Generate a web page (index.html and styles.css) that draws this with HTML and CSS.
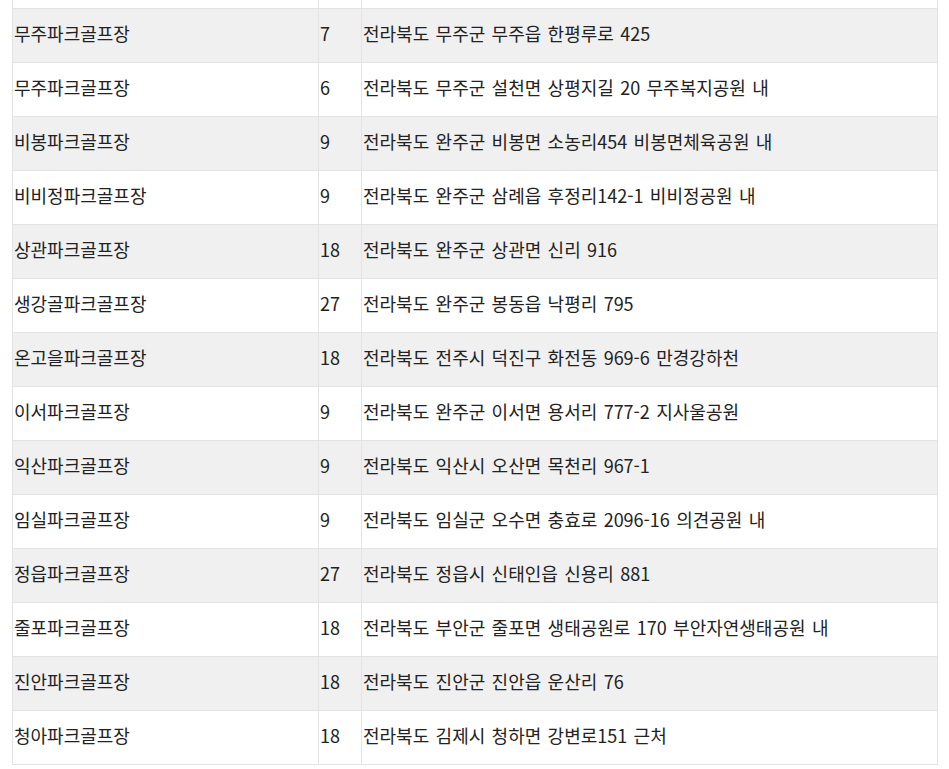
FILE: index.html
```html
<!DOCTYPE html>
<html lang="ko">
<head>
<meta charset="utf-8">
<link rel="stylesheet" href="styles.css">
</head>
<body>
<table class="golf">
  <colgroup><col class="c-name"><col class="c-holes"><col class="c-addr"></colgroup>
  <tbody>
    <tr class="top"><td></td><td></td><td></td></tr>
    <tr><td>무주파크골프장</td><td>7</td><td>전라북도 무주군 무주읍 한평루로 425</td></tr>
    <tr><td>무주파크골프장</td><td>6</td><td>전라북도 무주군 설천면 상평지길 20 무주복지공원 내</td></tr>
    <tr><td>비봉파크골프장</td><td>9</td><td>전라북도 완주군 비봉면 소농리454 비봉면체육공원 내</td></tr>
    <tr><td>비비정파크골프장</td><td>9</td><td>전라북도 완주군 삼례읍 후정리142-1 비비정공원 내</td></tr>
    <tr><td>상관파크골프장</td><td>18</td><td>전라북도 완주군 상관면 신리 916</td></tr>
    <tr><td>생강골파크골프장</td><td>27</td><td>전라북도 완주군 봉동읍 낙평리 795</td></tr>
    <tr><td>온고을파크골프장</td><td>18</td><td>전라북도 전주시 덕진구 화전동 969-6 만경강하천</td></tr>
    <tr><td>이서파크골프장</td><td>9</td><td>전라북도 완주군 이서면 용서리 777-2 지사울공원</td></tr>
    <tr><td>익산파크골프장</td><td>9</td><td>전라북도 익산시 오산면 목천리 967-1</td></tr>
    <tr><td>임실파크골프장</td><td>9</td><td>전라북도 임실군 오수면 충효로 2096-16 의견공원 내</td></tr>
    <tr><td>정읍파크골프장</td><td>27</td><td>전라북도 정읍시 신태인읍 신용리 881</td></tr>
    <tr><td>줄포파크골프장</td><td>18</td><td>전라북도 부안군 줄포면 생태공원로 170 부안자연생태공원 내</td></tr>
    <tr><td>진안파크골프장</td><td>18</td><td>전라북도 진안군 진안읍 운산리 76</td></tr>
    <tr><td>청아파크골프장</td><td>18</td><td>전라북도 김제시 청하면 강변로151 근처</td></tr>
  </tbody>
</table>
</body>
</html>
```

FILE: styles.css
```css
html, body {
  margin: 0;
  padding: 0;
  background: #ffffff;
}
body {
  padding-left: 12px;
  font-family: "Noto Sans CJK KR", "Noto Sans", sans-serif;
  font-size: 18px;
  color: #222222;
}
.golf {
  border-collapse: collapse;
  table-layout: fixed;
  width: 925px;
}
.c-name { width: 306px; }
.c-holes { width: 43px; }
.c-addr { width: 576px; }
.golf td {
  border: 1px solid #e3e3e3;
  height: 47px;
  padding: 0 0 6px 1px;
  vertical-align: middle;
  white-space: nowrap;
  line-height: 24px;
  word-spacing: 1.3px;
}
.golf tr.top td {
  height: 8px;
  padding: 0;
  border-top: none;
}
.golf tbody tr:nth-child(even) td {
  background: #f0f0f0;
}
```
